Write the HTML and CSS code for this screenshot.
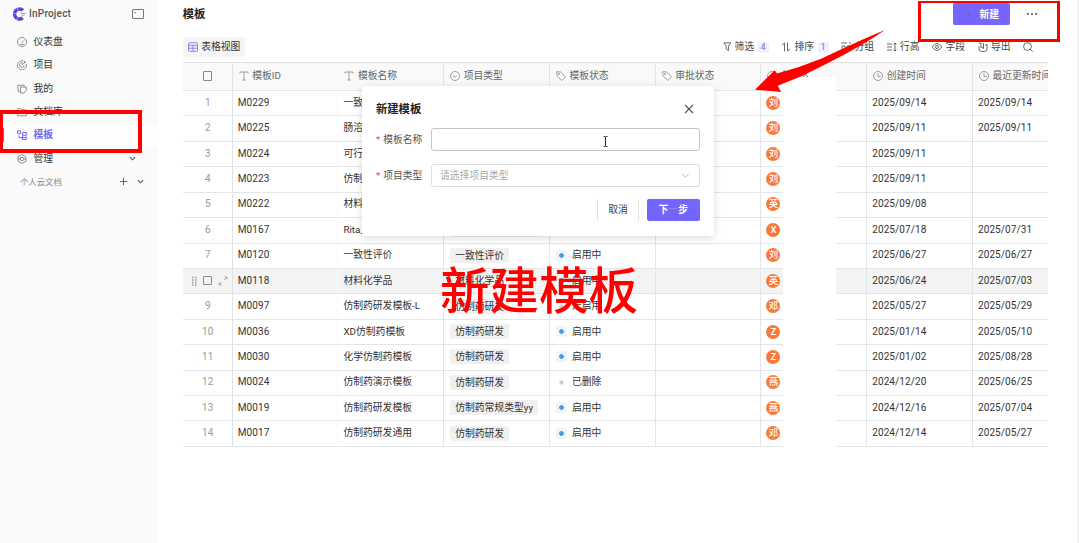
FILE: index.html
```
<!DOCTYPE html>
<html lang="zh-CN">
<head>
<meta charset="utf-8">
<title>InProject - 模板</title>
<link rel="stylesheet" href="styles.css">
</head>
<body>
<svg class="defs" width="0" height="0">
  <symbol id="text" viewBox="0 0 10 10"><path d="M1 2.500V1h8v1.500M5 1v8M3.300 9h3.400"/></symbol>
  <symbol id="select" viewBox="0 0 10 10"><circle cx="5" cy="5" r="4.500"/><path d="M3 4.300l2 1.800 2-1.800"/></symbol>
  <symbol id="tag" viewBox="0 0 10 10"><path d="M.7.7l4 .3 4.800 4.800-3.800 3.700L1 4.700z"/><circle cx="3" cy="3" r=".6"/></symbol>
  <symbol id="clock" viewBox="0 0 10 10"><circle cx="5" cy="5" r="4.500"/><path d="M5 2.200v3.300h2.700"/></symbol>
  <symbol id="down" viewBox="0 0 10 10"><path d="M2 3.500l3 3 3-3"/></symbol>
</svg>
<div class="app">
  <aside class="sidebar">
    <div class="brand">
      <svg class="logo" viewBox="0 0 14 14"><path d="M11 3.400A5 5 0 1 0 11 10.600" fill="none" stroke="#5547d8" stroke-width="3.400" stroke-dasharray="5.300 .4"/><path d="M8.500 6.500h5.200M9.500 8.200h3" stroke="#f58a4b" stroke-width="1.100"/></svg>
      <span class="brand-name">InProject</span>
      <svg class="collapse" viewBox="0 0 12 10"><rect x=".5" y=".5" width="11" height="9" rx=".5"/><path d="M3 2.500v2"/></svg>
    </div>
    <nav class="menu">
      <div class="menu-item"><svg class="ico" viewBox="0 0 10 10"><circle cx="5" cy="5" r="4.500"/><path d="M4.500 6L7 3.500M3 7.500h4"/></svg>仪表盘</div>
      <div class="menu-item"><svg class="ico" viewBox="0 0 10 10"><path d="M6.500 1A4.500 4.500 0 1 0 9.300 4"/><path d="M6 3A2.300 2.300 0 1 0 7.200 5.300M5 5.200L8 2M7.500 1v1.500H9"/></svg>项目</div>
      <div class="menu-item"><svg class="ico" viewBox="0 0 10 10"><path d="M2.500 7.500H1.200L.7 1.300h6.500l.4 1.200M3.500 3h5.700v3.500L7 9H3.500z"/></svg>我的</div>
      <div class="menu-item"><svg class="ico" viewBox="0 0 10 10"><path d="M.7 8.800V1.500h3l1 1.300h4.600v6z"/></svg>文档库</div>
      <div class="menu-item active"><svg class="ico" viewBox="0 0 10 10"><path d="M.7.8h3v3h-3zM5.700 2.500h3.600v2.800H5.700zM2 5.500v2.300h3M5.500 5.500v4h3.800V6.500M5.500 7.500H9"/></svg>模板</div>
      <div class="menu-item"><svg class="ico" viewBox="0 0 10 10"><path d="M5 .6l3.900 2.200v4.400L5 9.400 1.100 7.200V2.800zM.8 5H3M7 5h2.200"/><circle cx="5" cy="5" r="1.800"/></svg>管理<svg class="chev"><use href="#down"/></svg></div>
      <div class="menu-group"><span>个人云文档</span><svg class="plus" viewBox="0 0 10 10"><path d="M5 1v8M1 5h8"/></svg><svg class="chev"><use href="#down"/></svg></div>
    </nav>
  </aside>
  <main class="main">
    <header class="topbar">
      <h1>模板</h1>
      <button class="create"><svg viewBox="0 0 10 10"><path d="M5 1v8M1 5h8"/></svg>新建</button>
      <span class="more"><i></i><i></i><i></i></span>
    </header>
    <div class="toolbar">
      <span class="view"><svg viewBox="0 0 10 10"><rect x=".5" y=".7" width="9" height="8.600" rx="1"/><path d="M.5 3.300h9M.5 6.200h9M5 3.300v6"/></svg>表格视图</span>
      <div class="tools">
        <span class="tool"><svg class="narrow" viewBox="0 0 8 10"><path d="M.6.8h6.800L5.300 4v4.500L3 7V4z"/></svg><span>筛选</span><b>4</b></span>
        <span class="tool"><svg viewBox="0 0 10 10"><path d="M1 3l2.500-2v8.500M9 7L6.500 9V.5"/></svg><span>排序</span><b>1</b></span>
        <span class="tool"><svg viewBox="0 0 10 10"><path d="M0 1h6M8 1h2M1 4h3v4H1zM6 4h3v4H6z"/></svg><span>分组</span></span>
        <span class="tool"><svg viewBox="0 0 10 10"><path d="M0 2h5M0 5h5M0 8h5M8 1v8M6.500 2.500L8 1l1.500 1.500M6.500 7.500L8 9l1.500-1.500"/></svg><span>行高</span></span>
        <span class="tool"><svg viewBox="0 0 10 10"><path d="M.2 5Q5-2 9.800 5 5 12 .2 5z"/><circle cx="5" cy="5" r="1.500"/></svg><span>字段</span></span>
        <span class="tool"><svg viewBox="0 0 10 10"><path d="M1 4.500V7q0 2.500 2.500 2.500h3Q9 9.500 9 7V2M1 1h2v5M5.500 1v5.500L3.500 5M7 3h2"/></svg><span>导出</span></span>
        <span class="tool"><svg viewBox="0 0 10 10"><circle cx="4.500" cy="4.500" r="3.900"/><path d="M7.200 7.200l2.500 2.500"/></svg></span>
      </div>
    </div>
    <section class="table">
      <div class="row head"><div class="no"><i class="box"></i></div><div><svg><use href="#text"/></svg>模板ID</div><div><svg><use href="#text"/></svg>模板名称</div><div><svg><use href="#select"/></svg>项目类型</div><div><svg><use href="#tag"/></svg>模板状态</div><div><svg><use href="#tag"/></svg>审批状态</div><div><svg><use href="#clock"/></svg>创建人</div><div><svg><use href="#clock"/></svg>创建时间</div><div><svg><use href="#clock"/></svg>最近更新时间</div></div>
      <div class="row"><div class="no">1</div><div>M0229</div><div>一致性评价</div><div></div><div></div><div></div><div><em>刘</em></div><div>2025/09/14</div><div>2025/09/14</div></div>
      <div class="row"><div class="no">2</div><div>M0225</div><div>肠溶片</div><div></div><div></div><div></div><div><em>刘</em></div><div>2025/09/11</div><div>2025/09/11</div></div>
      <div class="row"><div class="no">3</div><div>M0224</div><div>可行性</div><div></div><div></div><div></div><div><em>刘</em></div><div>2025/09/11</div><div></div></div>
      <div class="row"><div class="no">4</div><div>M0223</div><div>仿制药</div><div></div><div></div><div></div><div><em>刘</em></div><div>2025/09/11</div><div></div></div>
      <div class="row"><div class="no">5</div><div>M0222</div><div>材料</div><div></div><div></div><div></div><div><em>英</em></div><div>2025/09/08</div><div></div></div>
      <div class="row"><div class="no">6</div><div>M0167</div><div>Rita_</div><div><span class="type">仿制药常规类型yyy</span></div><div><span class="status">启用中</span></div><div></div><div><em>X</em></div><div>2025/07/18</div><div>2025/07/31</div></div>
      <div class="row"><div class="no">7</div><div>M0120</div><div>一致性评价</div><div><span class="type">一致性评价</span></div><div><span class="status">启用中</span></div><div></div><div><em>刘</em></div><div>2025/06/27</div><div>2025/06/27</div></div>
      <div class="row hover"><div class="no"><svg class="grip" viewBox="0 0 6 10"><path d="M1 1.500h1.500M4 1.500h1.500M1 4h1.500M4 4h1.500M1 6.500h1.500M4 6.500h1.500M1 9h1.500M4 9h1.500"/></svg><i class="box"></i><svg viewBox="0 0 10 10"><path d="M6.500 1H9v2.500M9 1L6 4M3.500 9H1V6.500M1 9l3-3"/></svg></div><div>M0118</div><div>材料化学品</div><div><span class="type">材料化学品</span></div><div><span class="status">启用中</span></div><div></div><div><em>英</em></div><div>2025/06/24</div><div>2025/07/03</div></div>
      <div class="row"><div class="no">9</div><div>M0097</div><div>仿制药研发模板-L</div><div><span class="type">仿制药研发</span></div><div><span class="status off">未启用</span></div><div></div><div><em>邓</em></div><div>2025/05/27</div><div>2025/05/29</div></div>
      <div class="row"><div class="no">10</div><div>M0036</div><div>XD仿制药模板</div><div><span class="type">仿制药研发</span></div><div><span class="status">启用中</span></div><div></div><div><em>Z</em></div><div>2025/01/14</div><div>2025/05/10</div></div>
      <div class="row"><div class="no">11</div><div>M0030</div><div>化学仿制药模板</div><div><span class="type">仿制药研发</span></div><div><span class="status">启用中</span></div><div></div><div><em>Z</em></div><div>2025/01/02</div><div>2025/08/28</div></div>
      <div class="row"><div class="no">12</div><div>M0024</div><div>仿制药演示模板</div><div><span class="type">仿制药研发</span></div><div><span class="status off">已删除</span></div><div></div><div><em>燕</em></div><div>2024/12/20</div><div>2025/06/25</div></div>
      <div class="row"><div class="no">13</div><div>M0019</div><div>仿制药研发模板</div><div><span class="type">仿制药常规类型yy</span></div><div><span class="status">启用中</span></div><div></div><div><em>燕</em></div><div>2024/12/16</div><div>2025/07/04</div></div>
      <div class="row"><div class="no">14</div><div>M0017</div><div>仿制药研发通用</div><div><span class="type">仿制药研发</span></div><div><span class="status">启用中</span></div><div></div><div><em>邓</em></div><div>2024/12/14</div><div>2025/05/27</div></div>
    </section>
  </main>
</div>
<div class="redaction"></div>
<div class="modal">
  <div class="modal-head"><h2>新建模板</h2><svg viewBox="0 0 10 10"><path d="M1 1l8 8M9 1L1 9"/></svg></div>
  <div class="field"><label><i>*</i>模板名称</label><div class="input"><svg class="caret" viewBox="0 0 5 11"><path d="M.5.500h1.300l.7.500.7-.5h1.300M2.500 1v9M.5 10.500h1.300l.7-.5.7.5h1.300"/></svg></div></div>
  <div class="field second"><label><i>*</i>项目类型</label><div class="input select">请选择项目类型<svg><use href="#down"/></svg></div></div>
  <div class="actions"><button class="cancel">取消</button><button class="next"><span>下</span><span class="faint">一</span><span>步</span></button></div>
</div>
<div class="mark mark-menu"></div>
<div class="mark mark-create"></div>
<svg class="arrow" viewBox="750 25 140 70"><path d="M885 30Q865 38 821.700 58.500Q800 67.500 777 73.500L774.700 70.300 755 89.700l26 2.300-3.300-6.200L802 76 828 63Q862 46 885 30z" fill="#f00"/></svg>
<div class="caption">新建模板</div>
</body>
</html>
```

FILE: styles.css
```
* { box-sizing: border-box; }
body {
  margin: 0;
  width: 1079px;
  height: 543px;
  overflow: hidden;
  background: #fff;
  color: #333;
  font: 9.800px/14px Roboto, "Noto Sans CJK SC", sans-serif;
}
svg { fill: none; stroke: currentColor; stroke-width: .8; width: 10px; height: 10px; flex: none; }
.defs { display: none; }
h1, h2 { margin: 0; font-weight: 700; color: #222; }
button { border: 0; padding: 0; font: inherit; }
i, em { font-style: normal; }

.app { display: flex; height: 543px; border-right: 2px solid #f3f3f3; }
.sidebar { width: 158px; flex: none; background: #fafafa; }
.brand { display: flex; align-items: center; height: 28px; padding: 0 14px 0 12px; }
.brand .logo { width: 14px; height: 14px; }
.brand-name { margin-left: 3px; font-size: 10px; font-weight: 500; letter-spacing: .2px; color: #555; }
.brand .collapse { width: 12px; height: 10px; margin-left: auto; color: #555; }
.menu { padding-top: 2.500px; }
.menu-item { display: flex; align-items: center; height: 23.300px; padding: 0 21px 0 17px; gap: 6.500px; color: #333; }
.menu-item .ico { color: #777; }
.menu-item .chev { margin-left: auto; }
.chev { width: 9px; height: 9px; color: #555; stroke-width: 1.200; }
.menu-item.active { padding-left: 14px; margin-left: 3px; color: #7566f5; font-weight: 700; background: linear-gradient(#7566f5, #7566f5) left center / 1px 14px no-repeat, #fdfdfd; }
.menu-item.active .ico { color: #7566f5; stroke-width: 1; }
.menu-group { display: flex; align-items: center; height: 23.300px; padding: 0 13px 0 20px; font-size: 8.400px; color: #888; }
.menu-group .plus { width: 9px; height: 9px; margin-left: auto; margin-right: 8.500px; color: #555; stroke-width: 1; }

.main { flex: 1; min-width: 0; padding-left: 24.700px; padding-right: 29px; }
.topbar { display: flex; align-items: center; height: 28px; }
.topbar h1 { padding-top: 2px; font-size: 11.300px; }
.create { display: flex; align-items: center; justify-content: center; gap: 7px; width: 56.500px; height: 22px; margin-left: auto; padding: 1px 0 0 2px; border-radius: 2px; background: #7565ff; color: #fff; font-weight: 700; }
.create svg { width: 7px; height: 7px; color: #5f60ad; }
.more { display: flex; gap: 2px; margin: 0 11.500px 0 17px; }
.more i { width: 2px; height: 1.200px; background: #777; }
.toolbar { display: flex; align-items: center; justify-content: space-between; height: 34px; padding-top: 4px; padding-right: 15px; }
.view { display: flex; align-items: center; gap: 3.500px; width: 62px; height: 20px; padding-left: 5px; border-radius: 3px; background: #f5f5f6; white-space: nowrap; }
.view svg { color: #7566f5; }
.tools { display: flex; align-items: center; gap: 12.400px; color: #444; }
.tool { display: flex; align-items: center; gap: 3.500px; }
.tool .narrow { width: 8.500px; }
.tool b { width: 11px; height: 11px; border-radius: 2px; background: #f1f1fb; color: #7566f5; font-size: 8.500px; font-weight: 400; line-height: 11px; text-align: center; }

.table { width: 865.300px; overflow: hidden; border-top: 1px solid #dfe3e4; }
.row { display: grid; grid-template-columns: 50px repeat(8, 105.750px); width: 896px; height: 25.430px; border-bottom: 1px solid #e4e5e6; }
.row > div { display: flex; align-items: center; min-width: 0; padding: 0 0 1px 5px; border-right: 1px solid #e4e5e8; white-space: nowrap; }
.row > div:nth-child(2) { border-right-color: #f9f9f9; }
.row > .no { justify-content: center; gap: 6px; padding-left: 1px; border-right-color: #dde3e5; color: #999; font-size: 10px; }
.row > div:nth-child(2), .row > div:nth-child(8), .row > div:nth-child(9) { font-size: 10px; letter-spacing: .1px; }
.row.head { height: 28px; background: #f9f9f9; color: #666; }
.row.head > div { gap: 3.500px; padding-left: 6px; padding-bottom: 1px; font-size: 9.800px; }
.row.head > div:nth-child(n) { letter-spacing: 0; }
.row.head > .no { padding-left: 1px; }
.row.head svg { color: #888; }
.row.hover { background: #f4f4f4; }
.box { width: 9.500px; height: 9.500px; border: 1px solid #888; border-radius: 1px; }
.row > .no svg { width: 10px; }
.row.hover > .no { padding-left: 5px; }
.row > .no .grip { width: 6px; stroke-width: 1.300; }
.type { height: 15px; margin-left: 1px; padding: 0 5px; border-radius: 2px; background: #f0f0f0; line-height: 15px; }
.status { display: flex; align-items: center; gap: 5px; margin-left: 1px; }
.status::before { content: ""; width: 11px; height: 11px; border-radius: 3px; background: radial-gradient(circle, #4a9ae0 2px, #edf5fb 2.600px); }
.status.off::before { background: radial-gradient(circle, #ccc 1.800px, transparent 2.400px); }
.row em { width: 14px; height: 14px; border-radius: 50%; background: #fa7838; color: #fff; font-size: 9.500px; font-weight: 500; line-height: 13.500px; text-align: center; }
.redaction { position: absolute; left: 783px; top: 77px; width: 53px; height: 371px; background: #fff; }

.modal { position: absolute; left: 362px; top: 86px; width: 351.500px; height: 149.500px; padding: 14px 14px 0; border-radius: 3px; background: #fff; box-shadow: 0 2px 8px rgba(0, 0, 0, .15); }
.modal-head { display: flex; align-items: center; justify-content: space-between; height: 17px; padding-right: 6px; color: #555; }
.modal-head h2 { padding-top: 2px; font-size: 11.300px; }
.modal-head svg { stroke-width: 1.100; }
.field { display: flex; align-items: center; height: 22.500px; margin-top: 11px; }
.field.second { margin-top: 13.500px; }
.field label { display: flex; gap: 3px; width: 55px; padding-top: 1px; color: #555; }
.field label i { color: #f0483e; }
.input { display: flex; align-items: center; flex: 1; height: 22.500px; padding: 0 8px; border: 1px solid #c4c4c4; border-radius: 3px; }
.input .caret { width: 5px; height: 11px; margin: 5px 0 0 162.500px; color: #222; stroke-width: 1; }
.select { justify-content: space-between; padding-top: 1px; border-color: #dedede; color: #aaa; }
.select svg { width: 11px; height: 11px; }
.actions { display: flex; justify-content: flex-end; gap: 8px; margin-top: 12px; }
.cancel { width: 42px; height: 22px; padding-top: 1px; border: solid #e2e2e2; border-width: 0 1px; border-radius: 2px; background: #fff; color: #444; }
.next { display: flex; align-items: center; justify-content: center; width: 52.500px; height: 22px; padding-top: 1px; border-radius: 2px; background: #7565ff; color: #fff; font-weight: 700; }
.faint { color: #a59af5; font-weight: 300; }

.mark { position: absolute; border: 3.500px solid #f00; }
.mark-menu { left: -1px; top: 110px; width: 143px; height: 43px; border-width: 4px; }
.mark-create { left: 918px; top: 1px; width: 142px; height: 41px; border-width: 2px 3px 3px; }
.arrow { position: absolute; left: 750px; top: 25px; width: 140px; height: 70px; stroke: none; }
.caption { position: absolute; left: 440px; top: 257px; color: #f00; font: 500 49.500px/62px "Noto Sans CJK SC", sans-serif; white-space: nowrap; }
```
